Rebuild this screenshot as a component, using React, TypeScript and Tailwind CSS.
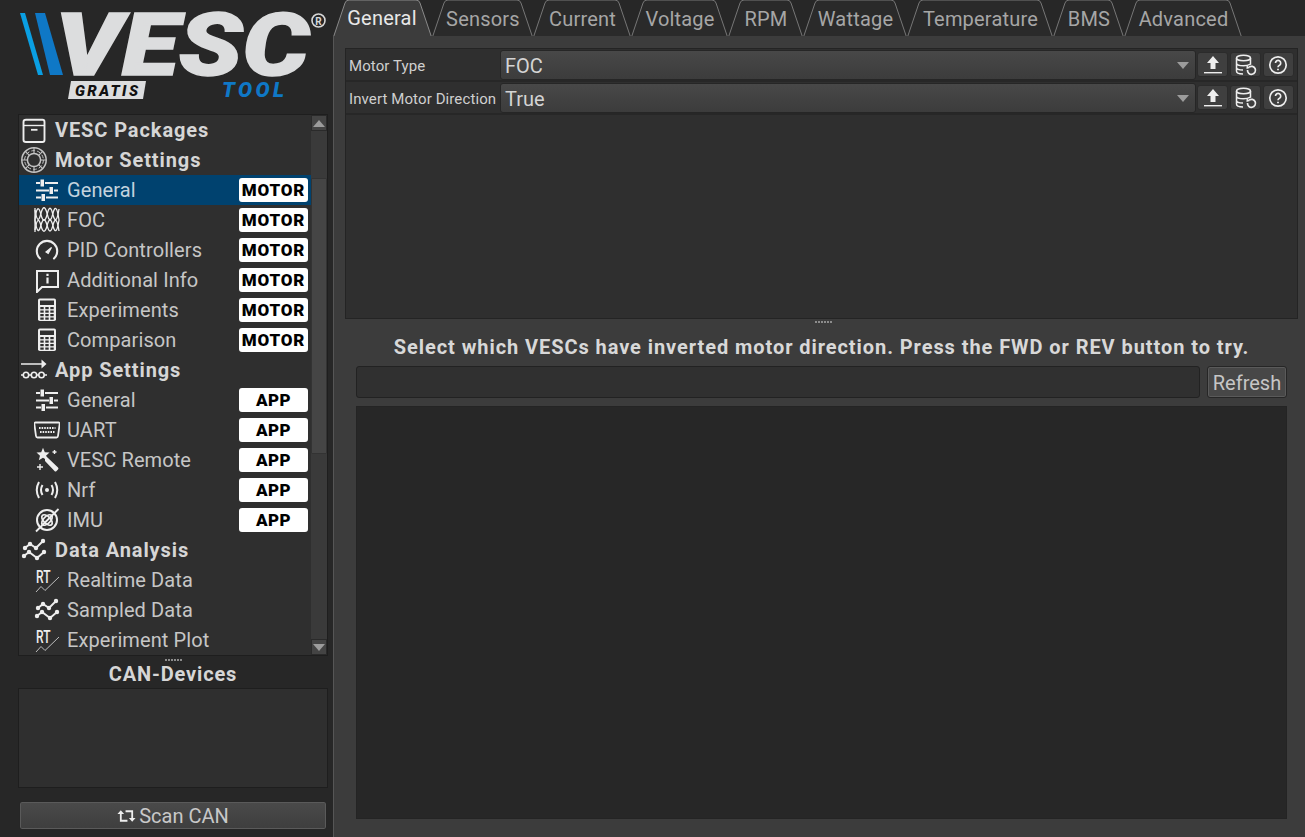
import React from "react";

const C = "#eeeeee";
const Ic = ({ children, className = "" }: { children: React.ReactNode; className?: string }) => (
  <svg viewBox="0 0 26 26" fill="none" stroke={C} strokeWidth="1.6" className={`w-[26px] h-[26px] shrink-0 ${className}`}>
    {children}
  </svg>
);

const Archive = () => (
  <Ic>
    <path d="M2.5 5 Q2.5 2.8 5 2.8 H21.5 Q23.5 2.8 23.5 5 V23 Q23.5 25 21.5 25 H5 Q2.5 25 2.5 23 Z" strokeWidth="1.9" />
    <path d="M2.5 8.5 H23.5" strokeWidth="1.4" />
    <path d="M10 12.8 H16.5" strokeWidth="1.8" />
  </Ic>
);
const Bearing = () => (
  <Ic>
    <circle cx="13" cy="13" r="12.2" stroke="#c4c4c4" strokeWidth="1.5" />
    <circle cx="13" cy="13" r="6.6" stroke="#c4c4c4" strokeWidth="1.5" />
    <circle cx="13" cy="13" r="9.4" stroke="#c4c4c4" strokeWidth="1" fill="none" strokeDasharray="3.8 2.1" />
    <path d="M13 .8 V6.4 M13 19.6 V25.2 M.8 13 H6.4 M19.6 13 H25.2 M4.4 4.4 L8.3 8.3 M17.7 17.7 L21.6 21.6 M4.4 21.6 L8.3 17.7 M17.7 8.3 L21.6 4.4" stroke="#c4c4c4" strokeWidth="1.1" />
  </Ic>
);
const Sliders = () => (
  <Ic>
    <path d="M2 6 H6 M11 6 H24 M2 13.5 H15 M20 13.5 H24 M2 20.5 H7 M12 20.5 H24" strokeWidth="2" />
    <path d="M6.5 2.5 H10 V9.5 H6.5 Z M15.5 10 H19 V17 H15.5 Z M7.5 17 H11 V24 H7.5 Z" fill={C} stroke="none" />
  </Ic>
);
const Foc = () => (
  <Ic>
    <path d="M1 1 V25" strokeWidth="1.3" />
    <path d="M1 13 C2.5 -1 5 -1 7 8 C9 15 11 15 13 8 C15 -1 17 -1 19 8 C21 15 23 15 25 2" strokeWidth="1.3" />
    <path d="M1 3 C3 15 5 15 7 6 C9 -1 11 -1 13 6 C15 15 17 15 19 6 C21 -1 23 -1 25 13" strokeWidth="1.3" />
    <path d="M1 13 C3 26 5 26 7 18 C9 11 11 11 13 18 C15 26 17 26 19 18 C21 11 23 11 25 24" strokeWidth="1.3" />
    <path d="M1 23 C3 11 5 11 7 19 C9 26 11 26 13 19 C15 11 17 11 19 19 C21 26 23 26 25 13" strokeWidth="1.3" />
  </Ic>
);
const Gauge = () => (
  <Ic>
    <path d="M6 21.5 A10.2 10.2 0 1 1 20 21.5" strokeWidth="2.1" strokeLinecap="round" />
    <path d="M12 15 L17.5 10.5 L14.2 16.5 Z" fill={C} strokeWidth="1.2" />
  </Ic>
);
const InfoBox = () => (
  <Ic>
    <path d="M3 4 H24 V20 H8 L3 25 Z" strokeWidth="2" />
    <path d="M13.5 6.8 V9 M13.5 10.6 V16.5" strokeWidth="2.2" />
  </Ic>
);
const Calc = () => (
  <Ic>
    <rect x="4" y="1.5" width="18" height="22.5" rx="1.8" fill={C} stroke="none" />
    <rect x="6" y="3.5" width="14" height="4.5" fill="#2f2f2f" stroke="none" />
    {[10.5, 14, 17.5, 21].map((y) =>
      [6.3, 11.3, 16.3].map((x) => <rect key={`${x}-${y}`} x={x} y={y - 0.5} width="3.4" height="2.2" fill="#2f2f2f" stroke="none" />)
    )}
  </Ic>
);
const AppFlow = () => (
  <Ic>
    <path d="M0 7 H23" strokeWidth="1.5" />
    <path d="M20.5 2.5 L25.5 7 L20.5 11.5" fill={C} stroke="none" />
    <path d="M0 18 H2 M8 18 H10 M16 18 H18 M23 18 H26" strokeWidth="1.4" />
    <circle cx="5" cy="18" r="2.7" strokeWidth="1.6" />
    <circle cx="13" cy="18" r="2.7" strokeWidth="1.6" />
    <circle cx="20.5" cy="18" r="2.7" strokeWidth="1.6" />
  </Ic>
);
const Uart = () => (
  <Ic>
    <path d="M1.5 5.5 H24.5 Q26 5.5 25.6 7.5 L24 19 Q23.8 20.5 22.5 20.5 H3.5 Q2.2 20.5 2 19 L.4 7.5 Q0 5.5 1.5 5.5 Z" strokeWidth="1.8" />
    <path d="M5 11 H21.5 M6 15 H20.5" strokeWidth="2.2" strokeDasharray="1.6 1" />
  </Ic>
);
const Wand = () => (
  <Ic>
    <path d="M11 8 L14 11 L24 20.5 Q25 21.5 24 22.5 L22.5 24 Q21.5 25 20.5 24 L11 14 Z" fill={C} stroke="none" />
    <path d="M9 0.8 L10.8 5.2 L15.5 5.5 L12 8.8 L13.2 13.2 L9 10.8 L4.8 13.2 L6 8.8 L2.5 5.5 L7.2 5.2 Z" fill={C} stroke="none" />
    <path d="M20.5 3 V7 M18.5 5 H22.5 M6 17 V23 M3 20 H9" strokeWidth="1.4" />
  </Ic>
);
const Radio = () => (
  <Ic>
    <circle cx="13" cy="13" r="2" fill={C} stroke="none" />
    <path d="M8.5 8 Q5.5 13 8.5 18 M17.5 8 Q20.5 13 17.5 18 M5 5 Q0.5 13 5 21 M21 5 Q25.5 13 21 21" strokeWidth="2" />
  </Ic>
);
const Imu = () => (
  <Ic>
    <circle cx="13" cy="13" r="10" strokeWidth="2" />
    <ellipse cx="13" cy="13" rx="3.5" ry="6.5" strokeWidth="1.7" transform="rotate(45 13 13)" />
    <ellipse cx="13" cy="13" rx="3.5" ry="6.5" strokeWidth="1.7" transform="rotate(-45 13 13)" />
    <path d="M2 24.5 L24.5 2" strokeWidth="1.8" />
  </Ic>
);
const Waves = () => (
  <Ic>
    <path d="M4 11 L9 7 L15 11 L22 4" strokeWidth="1.9" />
    <path d="M3 19 L8 15 L16 21 L23 15" strokeWidth="1.9" />
    {[[4, 11], [9, 7], [15, 11], [22, 4], [3, 19], [8, 15], [16, 21], [23, 15]].map(([x, y]) => (
      <circle key={`${x}-${y}`} cx={x} cy={y} r="2.2" fill={C} stroke="none" />
    ))}
  </Ic>
);
const Rt = () => (
  <Ic>
    <text x="2" y="16" fontFamily="Roboto, sans-serif" fontSize="19" fontWeight="500" fill={C} stroke="none" textLength="14.5" lengthAdjust="spacingAndGlyphs">RT</text>
    <path d="M2 25 L7 19.5 L11 23.5 L25 10" strokeWidth="0.9" stroke="#cccccc" />
  </Ic>
);

const Upload = () => (
  <svg viewBox="0 0 24 24" className="w-[24px] h-[24px]" fill={C}>
    <path d="M12 3 L18 10 H14.5 V16 H9.5 V10 H6 Z" />
    <rect x="3" y="19" width="18" height="1.4" />
  </svg>
);
const DbRestore = () => (
  <svg viewBox="0 0 24 24" className="w-[24px] h-[24px] -translate-x-[1px]" fill="none" stroke={C} strokeWidth="1.5">
    <ellipse cx="10.5" cy="5" rx="7" ry="2.8" />
    <path d="M3.5 5 V18 Q3.5 21 10 21 M3.5 10 Q3.5 12.8 10.5 12.8 Q14.5 12.8 17.5 11.2 V5 M3.5 14.5 Q3.5 17 10 17" />
    <path d="M14.5 17 A4 4 0 1 0 16 14.2" strokeWidth="1.7" />
    <path d="M13.5 12 L17 15 L13.5 16 Z" fill={C} stroke="none" />
  </svg>
);
const Help = () => (
  <svg viewBox="0 0 24 24" className="w-[24px] h-[24px] -translate-x-[1px]" fill="none" stroke={C} strokeWidth="1.7">
    <circle cx="12" cy="12" r="8.2" />
    <path d="M9.5 10 A2.6 2.6 0 1 1 13.5 12.2 Q12 13 12 14.3" />
    <path d="M12 15.7 V17.3" strokeWidth="1.8" />
  </svg>
);

const Arrow = ({ up }: { up?: boolean }) => (
  <svg viewBox="0 0 12 7" className="w-[12px] h-[7px]" fill="#9c9c9c">
    <path d={up ? "M6 0 L12 7 H0 Z" : "M0 0 H12 L6 7 Z"} />
  </svg>
);

const Badge = ({ t }: { t: string }) => (
  <span className={`ml-auto mr-[3px] flex h-[24px] w-[69px] items-center justify-center rounded-[3px] bg-white text-[17px] font-black leading-none text-black ${t === "MOTOR" ? "tracking-[0.8px]" : "tracking-[0.4px]"}`}>
    {t}
  </span>
);

const Head = ({ icon, t }: { icon: React.ReactNode; t: string }) => (
  <div className="flex h-[30px] items-center pl-[2px]">
    {icon}
    <span className="ml-[8px] text-[20px] font-bold tracking-[0.9px] text-[#d6d6d6]">{t}</span>
  </div>
);
const Item = ({ icon, t, badge, active }: { icon: React.ReactNode; t: string; badge?: string; active?: boolean }) => (
  <div className={`flex h-[30px] items-center pl-[15px] ${active ? "bg-[#00426f]" : ""}`}>
    {icon}
    <span className={`ml-[7px] text-[20px] tracking-[0.1px] ${active ? "text-[#c4d3de]" : "text-[#c6c6c6]"}`}>{t}</span>
    {badge && <Badge t={badge} />}
  </div>
);

const Dots = ({ className = "" }: { className?: string }) => (
  <div className={`flex gap-[1px] ${className}`}>
    {[0, 1, 2, 3, 4, 5].map((i) => (
      <span key={i} className="h-[2px] w-[2px] bg-[#8c8c8c]" />
    ))}
  </div>
);

const tabs: [string, number][] = [
  ["General", 99],
  ["Sensors", 101],
  ["Current", 98],
  ["Voltage", 97],
  ["RPM", 75],
  ["Wattage", 104],
  ["Temperature", 146],
  ["BMS", 71],
  ["Advanced", 118],
];

const Tab = ({ t, w, active }: { t: string; w: number; active?: boolean }) => (
  <div className="relative flex h-[36px] shrink-0 items-center justify-center" style={{ width: w }}>
    <svg className="absolute inset-0" width={w} height={36}>
      <path
        d={`M0.5 37 L12 3 Q13 0 16 0 H${w - 16} Q${w - 13} 0 ${w - 12} 3 L${w - 0.5} 37`}
        fill={active ? "#3c3c3c" : "#2a2a2a"}
        stroke={active ? "#8a8a8a" : "#777777"}
        strokeWidth="1"
      />
    </svg>
    <span className={`relative text-[20px] tracking-[0.2px] ${active ? "-ml-[1px] text-[#e8e8e8]" : "mt-[2px] ml-[1px] text-[#a6a6a6]"}`}>{t}</span>
  </div>
);

const Tool = ({ children }: { children: React.ReactNode }) => (
  <div className="flex h-[25px] w-[31px] items-center justify-center rounded-[3px] border border-[#2b2b2b] bg-[#3f3f3f]">{children}</div>
);

const Row = ({ label, value }: { label: string; value: string }) => (
  <div className="flex h-[33px] border-b-2 border-[#272727]">
    <div className="flex w-[154px] items-center pl-[3px] pt-[3px] text-[15px] tracking-[0.1px] text-[#cfcfcf]">{label}</div>
    <div className="mt-[1px] flex h-[30px] w-[696px] items-center rounded-[3px] border border-[#262626] bg-gradient-to-b from-[#484848] to-[#3c3c3c] pl-[4px] pr-[6px] text-[20px] text-[#d4d4d4]">
      <span className="mt-[1px]">{value}</span>
      <span className="ml-auto">
        <Arrow />
      </span>
    </div>
    <div className="ml-[1px] mt-[3px] flex h-[25px] gap-[2px]">
      <Tool><Upload /></Tool>
      <Tool><DbRestore /></Tool>
      <Tool><Help /></Tool>
    </div>
  </div>
);

export default function App() {
  return (
    <div className="flex h-[837px] w-[1305px] overflow-hidden bg-[#272727] font-['Roboto',sans-serif]">
      <aside className="w-[333px] shrink-0 pl-[18px]">
        <div className="-ml-[18px] h-[114px] w-[333px]">
          <svg width="333" height="114" viewBox="0 0 333 114" className="block">
            <polygon points="20,13 25,13 43,75 38,75" fill="#0a9fe3" />
            <polygon points="35,13 45,13 63,75 50,75" fill="#0f78c6" />
            <text x="55" y="75" fontFamily="Roboto, sans-serif" fontWeight="900" fontStyle="italic" fontSize="86" fill="#dcddde" stroke="#dcddde" strokeWidth="1.5" textLength="254" lengthAdjust="spacingAndGlyphs">VESC</text>
            <polygon points="71,81 146,81 143,99 68,99" fill="#dcddde" />
            <text x="75" y="96" fontFamily="Roboto, sans-serif" fontWeight="900" fontStyle="italic" fontSize="15" fill="#111" textLength="63">GRATIS</text>
            <text x="222" y="97" fontFamily="Roboto, sans-serif" fontWeight="900" fontStyle="italic" fontSize="21" fill="#0f78c6" textLength="62">TOOL</text>
            <circle cx="318.5" cy="20.5" r="6.5" fill="none" stroke="#d8d8d8" strokeWidth="1.6" />
            <text x="318.5" y="24.5" textAnchor="middle" fontFamily="Roboto, sans-serif" fontWeight="700" fontSize="10" fill="#d8d8d8">R</text>
          </svg>
        </div>
        <div className="flex h-[542px] w-[310px] border border-[#1e1e1e] bg-[#2f2f2f]">
          <div className="w-[292px] shrink-0 overflow-hidden">
            <Head icon={<Archive />} t="VESC Packages" />
            <Head icon={<Bearing />} t="Motor Settings" />
            <Item icon={<Sliders />} t="General" badge="MOTOR" active />
            <Item icon={<Foc />} t="FOC" badge="MOTOR" />
            <Item icon={<Gauge />} t="PID Controllers" badge="MOTOR" />
            <Item icon={<InfoBox />} t="Additional Info" badge="MOTOR" />
            <Item icon={<Calc />} t="Experiments" badge="MOTOR" />
            <Item icon={<Calc />} t="Comparison" badge="MOTOR" />
            <Head icon={<AppFlow />} t="App Settings" />
            <Item icon={<Sliders />} t="General" badge="APP" />
            <Item icon={<Uart />} t="UART" badge="APP" />
            <Item icon={<Wand />} t="VESC Remote" badge="APP" />
            <Item icon={<Radio />} t="Nrf" badge="APP" />
            <Item icon={<Imu />} t="IMU" badge="APP" />
            <Head icon={<Waves />} t="Data Analysis" />
            <Item icon={<Rt />} t="Realtime Data" />
            <Item icon={<Waves />} t="Sampled Data" />
            <Item icon={<Rt />} t="Experiment Plot" />
          </div>
          <div className="flex w-[16px] flex-col bg-[#3a3a3a]">
            <div className="flex h-[16px] items-center justify-center border border-[#2a2a2a] bg-[#444444]"><Arrow up /></div>
            <div className="h-[47px]" />
            <div className="h-[276px] rounded-[1px] border border-[#333333] bg-[#454545]" />
            <div className="flex-1" />
            <div className="flex h-[16px] items-center justify-center border border-[#2a2a2a] bg-[#444444]"><Arrow /></div>
          </div>
        </div>
        <div className="flex h-[6px] w-[310px] items-center justify-center pt-[2px]"><Dots /></div>
        <div className="flex h-[26px] w-[310px] items-center justify-center pb-[2px] text-[20px] font-bold tracking-[0.85px] text-[#d6d6d6]">CAN-Devices</div>
        <div className="h-[100px] w-[310px] border border-[#1e1e1e] bg-[#2f2f2f]" />
        <button className="ml-[1px] mt-[13px] flex h-[29px] w-[308px] items-center justify-center gap-[3px] rounded-[3px] border border-[#262626] bg-gradient-to-b from-[#4a4a4a] to-[#3e3e3e] text-[20px] text-[#c8c8c8] shadow-[inset_0_0_0_1px_#5a5a5a]">
          <svg viewBox="0 0 20 16" className="h-[16px] w-[19px]" fill="none" stroke={C} strokeWidth="1.9">
            <path d="M4 5 V13 H11 M16 11 V3 H9" />
            <path d="M0.5 6 L4 2 L7.5 6 Z M12.5 10 L16 14 L19.5 10 Z" fill={C} stroke="none" />
          </svg>
          Scan CAN
        </button>
      </aside>

      <main className="flex min-w-0 flex-1 flex-col">
        <div className="flex h-[36px] shrink-0">
          {tabs.map(([t, w], i) => (
            <Tab key={t} t={t} w={w} active={i === 0} />
          ))}
        </div>
        <div className="flex flex-1 flex-col border-l border-[#565656] bg-[#3c3c3c] pl-[11px] pt-[12px]">
          <div className="h-[271px] w-[953px] border border-[#242424] bg-[#2f2f2f]">
            <Row label="Motor Type" value="FOC" />
            <Row label="Invert Motor Direction" value="True" />
          </div>
          <div className="flex h-[6px] w-[953px] items-center justify-center"><Dots className="ml-[3px]" /></div>
          <div className="ml-[11px] flex h-[41px] w-[931px] items-center justify-center pt-[2px] text-[20px] font-bold tracking-[0.93px] text-[#d8d8d8]">
            Select which VESCs have inverted motor direction. Press the FWD or REV button to try.
          </div>
          <div className="ml-[11px] flex w-[931px] gap-[7px]">
            <div className="h-[32px] w-[844px] rounded-[3px] border border-[#222222] bg-[#303030]" />
            <button className="h-[32px] w-[80px] rounded-[3px] border border-[#262626] bg-[#474747] pt-[1px] text-[20px] text-[#c6c6c6] shadow-[inset_0_0_0_1px_#5a5a5a]">Refresh</button>
          </div>
          <div className="ml-[11px] mt-[8px] h-[413px] w-[931px] border border-[#242424] bg-[#272727]" />
        </div>
      </main>
    </div>
  );
}
